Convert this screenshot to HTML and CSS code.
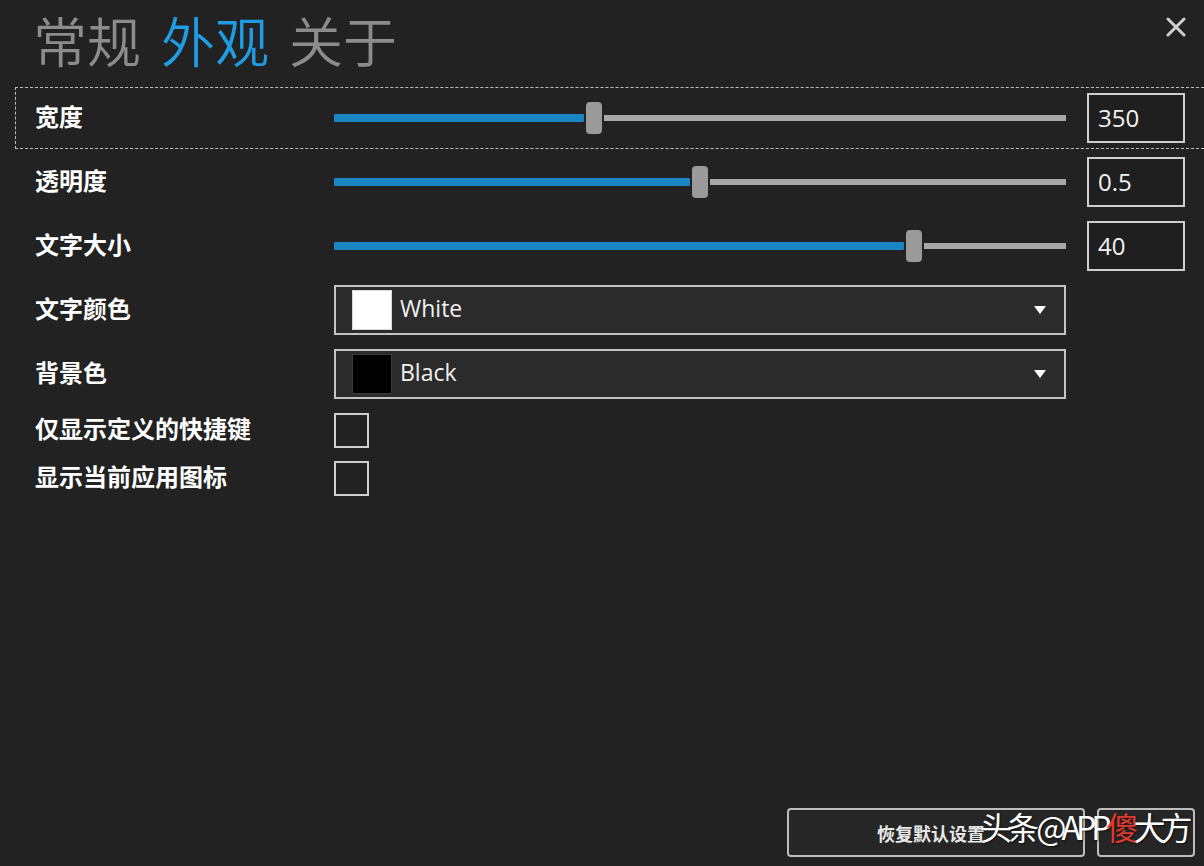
FILE: index.html
```html
<!DOCTYPE html>
<html lang="zh-CN">
<head>
  <meta charset="UTF-8" />
  <title>设置</title>
  <link rel="stylesheet" href="styles.css">
</head>
<body>
  <div class="window">
    <div class="header">
      <div class="tabs">
        <span class="tab">常规</span>
        <span class="tab active">外观</span>
        <span class="tab">关于</span>
      </div>
      <button class="close" title="关闭">
        <svg width="20" height="20" viewBox="0 0 20 20">
          <path d="M2 2 L18 18 M18 2 L2 18" stroke="#d0d0d0" stroke-width="3" stroke-linecap="round" />
        </svg>
      </button>
    </div>

    <div class="settings">
      <div class="row focused">
        <label>宽度</label>
        <div class="slider">
          <span class="fill" style="width: calc((100% - 20px) * 0.351)"></span>
          <span class="thumb"></span>
          <span class="rest"></span>
        </div>
        <input class="num" type="text" value="350" />
      </div>

      <div class="row">
        <label>透明度</label>
        <div class="slider">
          <span class="fill" style="width: calc((100% - 20px) * 0.5)"></span>
          <span class="thumb"></span>
          <span class="rest"></span>
        </div>
        <input class="num" type="text" value="0.5" />
      </div>

      <div class="row">
        <label>文字大小</label>
        <div class="slider">
          <span class="fill" style="width: calc((100% - 20px) * 0.8)"></span>
          <span class="thumb"></span>
          <span class="rest"></span>
        </div>
        <input class="num" type="text" value="40" />
      </div>

      <div class="row">
        <label>文字颜色</label>
        <div class="combo">
          <span class="swatch white"></span>
          <span class="combo-text">White</span>
          <span class="arrow"></span>
        </div>
      </div>

      <div class="row">
        <label>背景色</label>
        <div class="combo">
          <span class="swatch black"></span>
          <span class="combo-text">Black</span>
          <span class="arrow"></span>
        </div>
      </div>

      <div class="row short">
        <label>仅显示定义的快捷键</label>
        <span class="check"></span>
      </div>

      <div class="row short">
        <label>显示当前应用图标</label>
        <span class="check"></span>
      </div>
    </div>

    <div class="footer">
      <button class="btn wide">恢复默认设置</button>
      <button class="btn"></button>
      <div class="mark">头条 @APP<span class="red">傻</span>大方</div>
    </div>
  </div>
</body>
</html>
```

FILE: styles.css
```css
html,
body {
  margin: 0;
  padding: 0;
  height: 100%;
  overflow: hidden;
  background-color: #222222;
}

body {
  font-family: "Noto Sans CJK SC", "Noto Sans", sans-serif;
  color: #fff;
}

.window {
  display: flex;
  flex-direction: column;
  height: 100vh;
}

/* tab strip at the top */
.header {
  display: flex;
  justify-content: space-between;
  align-items: flex-start;
  height: 86px;
  box-sizing: border-box;
  padding: 11px 18px 0 33px;
}

.tabs {
  display: flex;
  gap: 20px;
}

.tab {
  font-size: 54px;
  line-height: 58px;
  font-weight: 350;
  color: #8c8c8c;
}

.tab.active {
  color: #1f9de2;
}

.close {
  margin-top: 6px;
  padding: 0;
  border: none;
  background: none;
  width: 20px;
  height: 20px;
  cursor: pointer;
}

/* setting rows */
.settings {
  margin-left: 14px;
  margin-right: -6px;
}

.row {
  display: grid;
  grid-template-columns: 278px 732px 98px;
  column-gap: 21px;
  align-items: center;
  height: 64px;
  padding-left: 21px;
  box-sizing: border-box;
}

.row.short {
  height: 48px;
}

.row.focused {
  outline: 1px dashed #bdbdbd;
  outline-offset: -2px;
}

label {
  padding-bottom: 6px;
  font-size: 24px;
  font-weight: 700;
  color: #fff;
}

.slider {
  display: flex;
  align-items: center;
  height: 32px;
}

.fill {
  flex: none;
  height: 8px;
  background-color: #1a86c4;
  border-radius: 1px;
}

.thumb {
  flex: none;
  width: 16px;
  height: 32px;
  margin: 0 2px;
  border-radius: 4px;
  background-color: #9a9a9a;
}

.rest {
  flex: 1;
  height: 6px;
  background-color: #a8a8a8;
}

.num {
  width: 98px;
  height: 50px;
  box-sizing: border-box;
  padding: 0 0 2px 9px;
  border: 2px solid #cfcfcf;
  background-color: #1f1f1f;
  color: #f2f2f2;
  font-family: "Open Sans", "Noto Sans", sans-serif;
  font-size: 24px;
  outline: none;
}

.combo {
  display: flex;
  align-items: center;
  height: 50px;
  box-sizing: border-box;
  padding: 0 18px 0 16px;
  border: 2px solid #c4c4c4;
  background-color: #2b2b2b;
}

.swatch {
  width: 40px;
  height: 40px;
  box-sizing: border-box;
}

.swatch.white {
  background-color: #fff;
  border: 1px solid #d8d8d8;
}

.swatch.black {
  background-color: #000;
  border: 1px solid #3a3a3a;
}

.combo-text {
  flex: 1;
  margin-left: 8px;
  padding-bottom: 4px;
  font-family: "Open Sans", "Noto Sans", sans-serif;
  font-size: 23px;
  color: #f0f0f0;
}

.arrow {
  width: 0;
  height: 0;
  border-left: 6px solid transparent;
  border-right: 6px solid transparent;
  border-top: 8px solid #fff;
}

.check {
  width: 35px;
  height: 35px;
  box-sizing: border-box;
  border: 2px solid #cfcfcf;
}

/* bottom buttons */
.footer {
  position: relative;
  display: flex;
  justify-content: flex-end;
  gap: 12px;
  margin-top: auto;
  padding: 0 9px 9px 0;
}

.btn {
  width: 98px;
  height: 49px;
  padding: 0 0 0 4px;
  border: 2px solid #bdbdbd;
  border-radius: 4px;
  background-color: #262626;
  color: #e8e8e8;
  font-family: "Noto Sans CJK SC", sans-serif;
  font-size: 18px;
  font-weight: 700;
  text-align: left;
  cursor: pointer;
}

.btn.wide {
  width: 298px;
  padding-left: 88px;
}

.mark {
  position: absolute;
  left: 980px;
  top: -5px;
  font-family: "Noto Sans CJK SC", "Noto Sans", sans-serif;
  font-size: 32px;
  letter-spacing: -5px;
  color: #fff;
  text-shadow: 1px 1px 2px rgba(0, 0, 0, 0.6);
  white-space: nowrap;
}

.mark .red {
  color: #e03a2e;
}
```
